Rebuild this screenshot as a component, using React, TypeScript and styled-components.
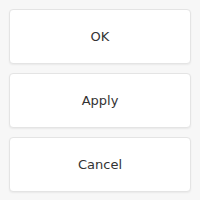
import React from 'react'
import styled, { createGlobalStyle } from 'styled-components'

const Global = createGlobalStyle`
    html, body {
        margin: 0;
        padding: 0;
        background: #f7f7f7;
    }
`

const Stack = styled.div`
    display: flex;
    flex-direction: column;
    gap: 9px;
    padding: 9px;
    width: 200px;
    box-sizing: border-box;
`

const Button = styled.button`
    height: 55px;
    width: 100%;
    background: #ffffff;
    border: 1px solid #e4e4e4;
    border-radius: 4px;
    box-shadow: 0 1px 2px rgba(0, 0, 0, 0.06);
    font-family: 'DejaVu Sans', sans-serif;
    font-size: 13px;
    color: #333333;
    cursor: pointer;
`

const App: React.FC = () => {
    return (
        <>
            <Global />
            <Stack>
                <Button>OK</Button>
                <Button>Apply</Button>
                <Button>Cancel</Button>
            </Stack>
        </>
    )
}

export default App
